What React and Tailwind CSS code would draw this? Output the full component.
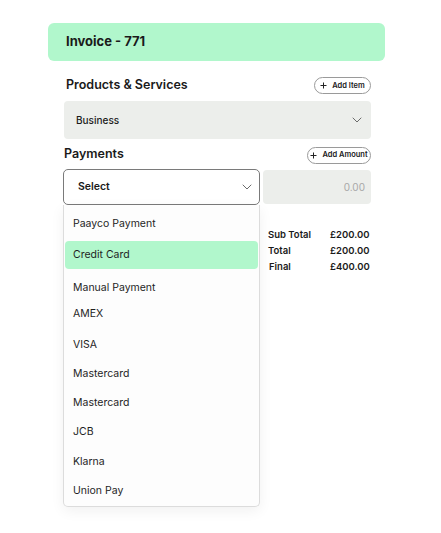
import React from "react";

const Chevron = ({ className = "" }) => (
  <svg width="10" height="6" viewBox="0 0 10 6" fill="none" className={className}>
    <path d="M1 1l4 4 4-4" stroke="#6b6b6b" strokeWidth="1" strokeLinecap="round" strokeLinejoin="round" />
  </svg>
);

const Plus = () => (
  <svg width="7" height="7" viewBox="0 0 7 7" fill="none">
    <path d="M3.5 0.5v6M0.5 3.5h6" stroke="#222" strokeWidth="1" />
  </svg>
);

const Pill = ({ children, w }) => (
  <button className={`flex h-[17px] items-center justify-center gap-[5px] rounded-full border border-[#9a9a9a] bg-white text-[7.5px] font-semibold text-[#1a1a1a] ${w}`}>
    <Plus />
    {children}
  </button>
);

export default function App() {
  const items = [
    { t: "Paayco Payment", cls: "mt-[6px] h-[26px]" },
    { t: "Credit Card", cls: "mt-[4px] h-[28px] bg-[#b1f7cc] rounded-[4px]" },
    { t: "Manual Payment", cls: "mt-[6px] h-[26px]" },
    { t: "AMEX", cls: "mt-0 h-[26px]" },
    { t: "VISA", cls: "mt-[5px] h-[26px]" },
    { t: "Mastercard", cls: "mt-[3px] h-[26px]" },
    { t: "Mastercard", cls: "mt-[3px] h-[26px]" },
    { t: "JCB", cls: "mt-[3px] h-[26px]" },
    { t: "Klarna", cls: "mt-[4px] h-[26px]" },
    { t: "Union Pay", cls: "mt-[3px] h-[26px]" },
  ];
  return (
    <div className="h-[533px] w-[441px] bg-white text-[#1a1a1a]" style={{ fontFamily: "Inter, 'Open Sans', sans-serif" }}>
      <div className="pt-[23px] pl-[48px]">
        <div className="flex h-[38px] w-[337px] items-center rounded-[6px] bg-[#b1f7cc] pl-[18px] text-[13px] font-bold">
          Invoice - 771
        </div>
      </div>
      <div className="ml-[64px] w-[307px]">
        <div className="mt-[16px] flex h-[17px] items-center justify-between">
          <span className="ml-[2px] text-[12.5px] font-semibold">Products &amp; Services</span>
          <Pill w="w-[57px]">Add Item</Pill>
        </div>
        <div className="mt-[7px] flex h-[38px] items-center justify-between rounded-[4px] bg-[#eceeeb] pl-[12px] pr-[9px] text-[10px] font-medium">
          <span className="mt-[1px]">Business</span>
          <Chevron />
        </div>
        <div className="mt-[8px] flex h-[16px] items-center justify-between">
          <span className="-mt-[1px] text-[12.5px] font-semibold">Payments</span>
          <Pill w="w-[64px]">Add Amount</Pill>
        </div>
        <div className="relative mt-[6px] flex gap-[3px]">
          <div className="relative -ml-[1px] w-[197px]">
            <div className="flex h-[36px] items-center justify-between rounded-[5px] border border-[#7a7a7a] bg-white pl-[14px] pr-[7px] text-[10.5px] font-semibold">
              <span>Select</span>
              <Chevron />
            </div>
            <div className="absolute left-0 top-[36px] z-10 flex h-[302px] w-[197px] flex-col rounded-b-[5px] border border-t-0 border-[#dcdcdc] bg-[#fdfdfd] px-[1px] shadow-[0_4px_14px_rgba(0,0,0,0.06)]">
              {items.map((it, i) => (
                <div key={i} className={`flex items-center pl-[8px] text-[10.5px] font-normal text-[#1f1f1f] ${it.cls}`}>
                  {it.t}
                </div>
              ))}
            </div>
          </div>
          <div className="mt-[1px] flex h-[34px] flex-1 items-center justify-end rounded-[4px] bg-[#eceeeb] pr-[6px] text-[10px] text-[#a8a8a8]">
            0.00
          </div>
        </div>
        <div className="ml-[204px] mt-[23px] grid grid-cols-[62px_auto] gap-y-[3px] text-[9.5px] font-semibold leading-[13px]">
          <span>Sub Total</span>
          <span>£200.00</span>
          <span>Total</span>
          <span>£200.00</span>
          <span className="pl-[1px]">Final</span>
          <span>£400.00</span>
        </div>
      </div>
    </div>
  );
}
